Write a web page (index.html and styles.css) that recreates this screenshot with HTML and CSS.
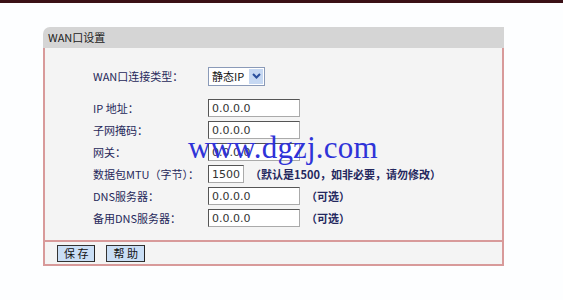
FILE: index.html
```html
<!DOCTYPE html>
<html lang="zh-CN">
<head>
<meta charset="UTF-8">
<title>WAN口设置</title>
<link rel="stylesheet" href="styles.css">
</head>
<body>
    <div class="topbar"></div>

    <div class="panel">
        <div class="panel-title">WAN口设置</div>

        <div class="panel-body">
            <div class="row row-first">
                <span class="label">WAN口连接类型：</span>
                <div class="select">
                    <span class="select-text">静态IP</span>
                    <span class="select-arrow">
                        <svg width="9" height="6" viewBox="0 0 9 6"><path d="M1 1 L4.5 4.5 L8 1" fill="none" stroke="#2b4f9c" stroke-width="2"/></svg>
                    </span>
                </div>
            </div>

            <div class="row">
                <span class="label">IP 地址：</span>
                <input class="field" type="text" value="0.0.0.0">
            </div>
            <div class="row">
                <span class="label">子网掩码：</span>
                <input class="field" type="text" value="0.0.0.0">
            </div>
            <div class="row">
                <span class="label">网关：</span>
                <input class="field" type="text" value="0.0.0.0">
            </div>
            <div class="row">
                <span class="label">数据包MTU（字节）：</span>
                <input class="field field-short" type="text" value="1500">
                <span class="hint">（默认是1500，如非必要，请勿修改）</span>
            </div>
            <div class="row">
                <span class="label">DNS服务器：</span>
                <input class="field" type="text" value="0.0.0.0">
                <span class="hint">（可选）</span>
            </div>
            <div class="row">
                <span class="label">备用DNS服务器：</span>
                <input class="field" type="text" value="0.0.0.0">
                <span class="hint">（可选）</span>
            </div>

            <!-- 水印 -->
            <div class="watermark">www.dgzj.com</div>
        </div>

        <div class="panel-foot">
            <button class="btn">保 存</button>
            <button class="btn">帮 助</button>
        </div>
    </div>
</body>
</html>
```

FILE: styles.css
```css
body {
    margin: 0;
    background: #fdfeff;
    font-family: "Noto Sans CJK SC", "DejaVu Sans", sans-serif;
    font-size: 12px;
    color: #1f2450;
}
.topbar {
    height: 3px;
    background: #3a1016;
}

.panel {
    width: 461px;
    margin: 24px 0 0 43px;
}
.panel-title {
    height: 21px;
    line-height: 21px;
    padding-left: 5px;
    background: #d5d5d5;
    border-top-left-radius: 7px;
    color: #222;
    font-size: 11px;
}

.panel-body {
    position: relative;
    padding: 17px 0 11px 48px;
    background: #f4f4f4;
    border-left: 2px solid #d89a9a;
    border-right: 2px solid #d89a9a;
}
.row {
    display: flex;
    align-items: center;
    height: 22px;
}
.row-first {
    margin-bottom: 10px;
}
.label {
    width: 115px;
    font-size: 11px;
    color: #26285a;
}

/* 下拉框 */
.select {
    display: flex;
    align-items: center;
    width: 55px;
    height: 17px;
    background: #fff;
    border: 1px solid #8a9ab8;
}
.select-text {
    flex: 1;
    padding-left: 3px;
    font-size: 11px;
    color: #111;
}
.select-arrow {
    display: flex;
    align-items: center;
    justify-content: center;
    width: 14px;
    height: 15px;
    margin-right: 1px;
    background: #c6d8f2;
}

/* 输入框 */
.field {
    box-sizing: border-box;
    width: 92px;
    height: 18px;
    margin: 0;
    padding: 0 3px;
    border: 1px solid #555;
    border-right-color: #aaa;
    border-bottom-color: #aaa;
    background: #fff;
    font-family: "DejaVu Sans", sans-serif;
    font-size: 11px;
    color: #333;
    outline: none;
}
.field-short {
    width: 36px;
}
.hint {
    margin-left: 6px;
    font-size: 11px;
    font-weight: bold;
    color: #24285e;
}

.watermark {
    position: absolute; /* 覆盖在表单上 */
    left: 143px;
    top: 84px;
    font-family: "Liberation Serif", serif;
    font-size: 31px;
    line-height: 32px;
    color: #2f33d8;
    letter-spacing: 0.2px;
}

.panel-foot {
    display: flex;
    align-items: center;
    gap: 11px;
    height: 22px;
    padding-left: 12px;
    background: #f4f4f4;
    border: 2px solid #d89a9a;
}
.btn {
    height: 17px;
    padding: 0 6px;
    background: #c9def5;
    border: 1px solid #333;
    border-right-color: #222;
    font-family: "Noto Sans CJK SC", sans-serif;
    font-size: 11px;
    line-height: 15px;
    color: #111;
}
```
